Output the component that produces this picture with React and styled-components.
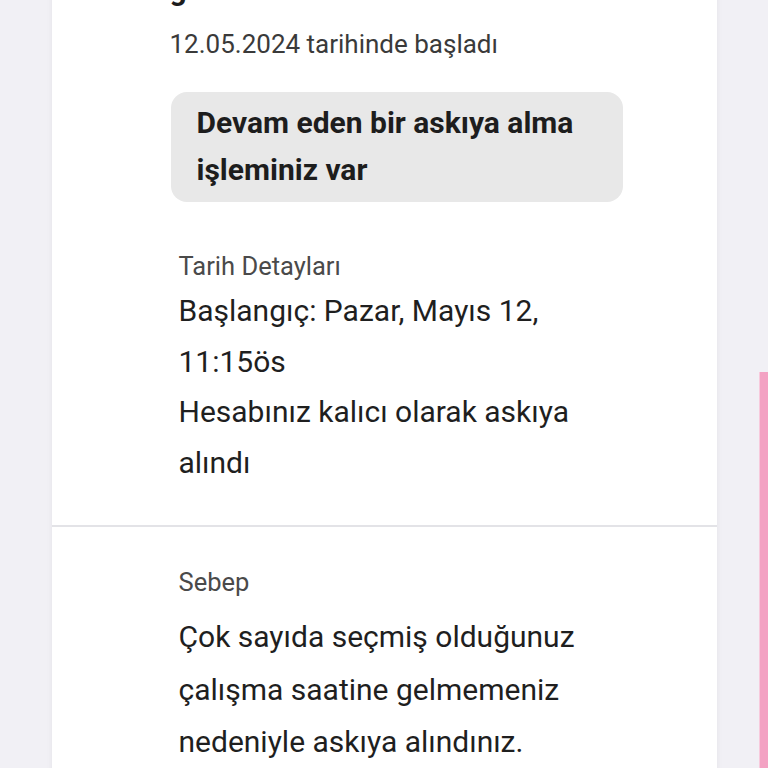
import React from "react";
import styled, { createGlobalStyle } from "styled-components";

const GlobalStyle = createGlobalStyle`
  html, body {
    margin: 0;
    padding: 0;
    background: #f1f0f5;
    font-family: Roboto, "Noto Sans", "Liberation Sans", sans-serif;
    overflow: hidden;
  }
  * { box-sizing: border-box; }
`;

const Page = styled.div`
  height: 768px;
  overflow: hidden;
  background: #f1f0f5;
`;

const Card = styled.div`
  width: 665px;
  margin: 0 auto;
  background: #ffffff;
  box-shadow: 0 0 6px rgba(0, 0, 0, 0.06);
`;

const Section = styled.section`
  padding: ${(p) => p.$pad};
  border-top: ${(p) => (p.$divided ? "2px solid #e3e3e7" : "none")};
`;

const Header = styled.div`
  padding-left: 118px;
`;

const Title = styled.h1`
  margin: -30px 0 0;
  font-size: 30px;
  line-height: 40px;
  font-weight: 700;
  color: #1d1d1d;
`;

const Subtitle = styled.p`
  margin: 19px 0 0;
  font-size: 26px;
  line-height: 30px;
  color: #3a3a3a;
`;

const Notice = styled.div`
  margin: 33px 0 0 1px;
  width: 452px;
  padding: 7px 24px 9px 26px;
  background: #e8e8e8;
  border-radius: 16px;
  font-size: 30px;
  line-height: 47px;
  font-weight: 700;
  color: #1d1d1d;
`;

const Detail = styled.div`
  padding-left: 127px;
  width: 557px;
  margin-top: ${(p) => p.$top};
`;

const Label = styled.div`
  font-size: 25.5px;
  line-height: 30px;
  color: #4a4a4a;
`;

const Body = styled.p`
  margin: ${(p) => p.$gap} 0 0;
  font-size: 30px;
  line-height: ${(p) => p.$lh};
  color: #1f1f1f;
`;

const EdgeTab = styled.div`
  position: fixed;
  right: 0;
  top: 372px;
  width: 9px;
  height: 396px;
  background: #f3a2c3;
  border-left: 1px solid #f8c9dc;
`;

export default function App() {
  return (
    <>
      <GlobalStyle />
      <Page>
        <Card>
          <Section $pad="0 0 37px">
            <Header>
              <Title>gelmediniz</Title>
              <Subtitle>12.05.2024 tarihinde başladı</Subtitle>
              <Notice>Devam eden bir askıya alma işleminiz var</Notice>
            </Header>
            <Detail $top="49px">
              <Label>Tarih Detayları</Label>
              <Body $gap="5px" $lh="50.5px">
                Başlangıç: Pazar, Mayıs 12, 11:15ös
                <br />
                Hesabınız kalıcı olarak askıya alındı
              </Body>
            </Detail>
          </Section>
          <Section $divided $pad="40px 0 40px">
            <Detail $top="0">
              <Label>Sebep</Label>
              <Body $gap="14px" $lh="52.5px">
                Çok sayıda seçmiş olduğunuz çalışma saatine gelmemeniz
                nedeniyle askıya alındınız.
              </Body>
            </Detail>
          </Section>
        </Card>
        <EdgeTab />
      </Page>
    </>
  );
}
